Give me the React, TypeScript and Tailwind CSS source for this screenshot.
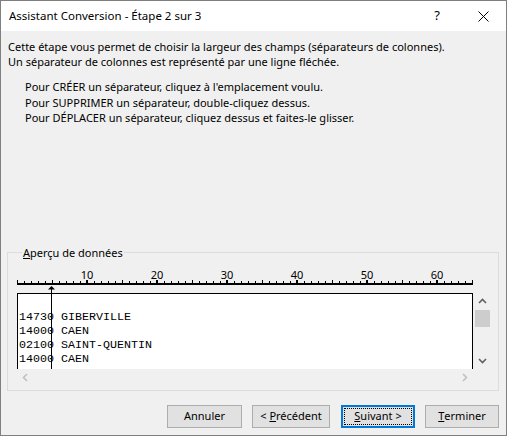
import React from "react";

const UI = { fontFamily: '"Noto Sans", "Liberation Sans", sans-serif' };
const MONO = { fontFamily: '"Liberation Mono", "Courier New", monospace' };

function Ruler() {
  const ticks = [];
  for (let i = 0; i <= 65; i++) {
    const x = 7 * i;
    if (i % 10 === 0 && i > 0) {
      ticks.push(<rect key={i} x={x - 1} y={13} width={2} height={3} fill="#000" />);
    } else if (i % 5 === 0) {
      ticks.push(<rect key={i} x={x} y={13} width={1} height={3} fill="#000" />);
    } else {
      ticks.push(<rect key={i} x={x} y={14} width={1} height={2} fill="#000" />);
    }
  }
  const labels = [10, 20, 30, 40, 50, 60];
  return (
    <svg width={456} height={18} className="block">
      <rect x={0} y={16} width={456} height={2} fill="#000" />
      {ticks}
      {labels.map((n) => (
        <text
          key={n}
          x={7 * n}
          y={12}
          textAnchor="middle"
          fontSize={11}
          fill="#000"
          style={UI}
        >
          {n}
        </text>
      ))}
    </svg>
  );
}

function Chevron({ dir, color }: { dir: "up" | "down" | "left" | "right"; color: string }) {
  const paths: Record<string, string> = {
    up: "M1 6 L4.5 2.5 L8 6",
    down: "M1 3 L4.5 6.5 L8 3",
    left: "M6 1 L2.5 4.5 L6 8",
    right: "M3 1 L6.5 4.5 L3 8",
  };
  return (
    <svg width={9} height={9} viewBox="0 0 9 9" className="block">
      <path d={paths[dir]} fill="none" stroke={color} strokeWidth={1.6} />
    </svg>
  );
}

function Btn({
  children,
  w,
  focused,
}: {
  children: React.ReactNode;
  w: string;
  focused?: boolean;
}) {
  if (focused) {
    return (
      <div className={`${w} h-[23px] border-2 border-[#0078d7] bg-[#e1e1e1] p-[1px]`}>
        <div className="h-full w-full border border-dotted border-black flex items-center justify-center text-[11px] text-black">
          {children}
        </div>
      </div>
    );
  }
  return (
    <div
      className={`${w} h-[23px] border border-[#adadad] bg-[#e1e1e1] flex items-center justify-center text-[11px] text-black`}
    >
      {children}
    </div>
  );
}

export default function App() {
  const rows = ["", "14730 GIBERVILLE", "14000 CAEN", "02100 SAINT-QUENTIN", "14000 CAEN"];
  return (
    <div
      className="w-[507px] h-[436px] border border-[#7f7f7f] bg-[#f0f0f0] flex flex-col text-black overflow-hidden"
      style={UI}
    >
      {/* Title bar */}
      <div className="h-[30px] bg-white flex items-center shrink-0">
        <span className="pl-[8px] text-[11.5px]">Assistant Conversion - Étape 2 sur 3</span>
        <div className="ml-auto flex h-full">
          <div className="w-[46px] h-full flex items-center justify-center text-[13px]">?</div>
          <div className="w-[46px] h-full flex items-center justify-center">
            <svg width={11} height={11} viewBox="0 0 11 11">
              <path d="M0.5 0.5 L10.5 10.5 M10.5 0.5 L0.5 10.5" stroke="#000" strokeWidth={1} fill="none" />
            </svg>
          </div>
        </div>
      </div>

      {/* Body */}
      <div className="flex-1 flex flex-col px-[6px]">
        <div className="mt-[8px] pl-[1px] text-[11px] leading-[15px]">
          <div>Cette étape vous permet de choisir la largeur des champs (séparateurs de colonnes).</div>
          <div>Un séparateur de colonnes est représenté par une ligne fléchée.</div>
        </div>
        <div className="mt-[10px] pl-[18px] text-[11px] leading-[15.5px]">
          <div>Pour CRÉER un séparateur, cliquez à l'emplacement voulu.</div>
          <div>Pour SUPPRIMER un séparateur, double-cliquez dessus.</div>
          <div>Pour DÉPLACER un séparateur, cliquez dessus et faites-le glisser.</div>
        </div>

        <fieldset className="mt-[119px] w-[492px] border border-[#dcdcdc] pl-[9px] pb-[4px]">
          <legend className="ml-[5px] px-[1px] text-[11px] leading-[15px]">
            <span className="underline">A</span>perçu de données
          </legend>
          <div className="relative mt-[7px] w-[473px]">
            <Ruler />
            <div className="mt-[8px] flex">
              <div
                className="w-[456px] h-[76px] border-t border-l border-r border-black bg-white pt-[2px] pl-[1px] text-[11.67px] leading-[14px] text-black overflow-hidden"
                style={MONO}
              >
                {rows.map((r, i) => (
                  <div key={i} className="h-[14px] whitespace-pre">
                    {r}
                  </div>
                ))}
              </div>
              <div className="w-[17px] h-[76px] flex flex-col">
                <div className="h-[17px] flex items-center justify-center pl-[1px]">
                  <Chevron dir="up" color="#606060" />
                </div>
                <div className="h-[17px] ml-[2px] w-[15px] bg-[#cdcdcd]" />
                <div className="flex-1" />
                <div className="h-[17px] flex items-center justify-center pl-[1px]">
                  <Chevron dir="down" color="#606060" />
                </div>
              </div>
            </div>
            <div className="w-[456px] h-[17px] flex items-center justify-between px-[4px]">
              <Chevron dir="left" color="#c0c0c0" />
              <Chevron dir="right" color="#c0c0c0" />
            </div>
            {/* column separator arrow */}
            <svg
              className="absolute left-[30px] top-[19px]"
              width={9}
              height={83}
              viewBox="0 0 9 83"
            >
              <path d="M4.5 0 L8 3.5 L1 3.5 Z" fill="#000" />
              <rect x={4} y={3} width={1} height={80} fill="#000" />
            </svg>
          </div>
        </fieldset>

        <div className="mt-[14px] flex justify-end pr-[1px]">
          <Btn w="w-[75px]">Annuler</Btn>
          <div className="w-[10px]" />
          <Btn w="w-[78px]">
            &lt;&nbsp;<span className="underline">P</span>récédent
          </Btn>
          <div className="w-[11px]" />
          <Btn w="w-[74px]" focused>
            <span className="underline">S</span>uivant &gt;
          </Btn>
          <div className="w-[10px]" />
          <Btn w="w-[74px]">
            <span className="underline">T</span>erminer
          </Btn>
        </div>
      </div>
    </div>
  );
}
